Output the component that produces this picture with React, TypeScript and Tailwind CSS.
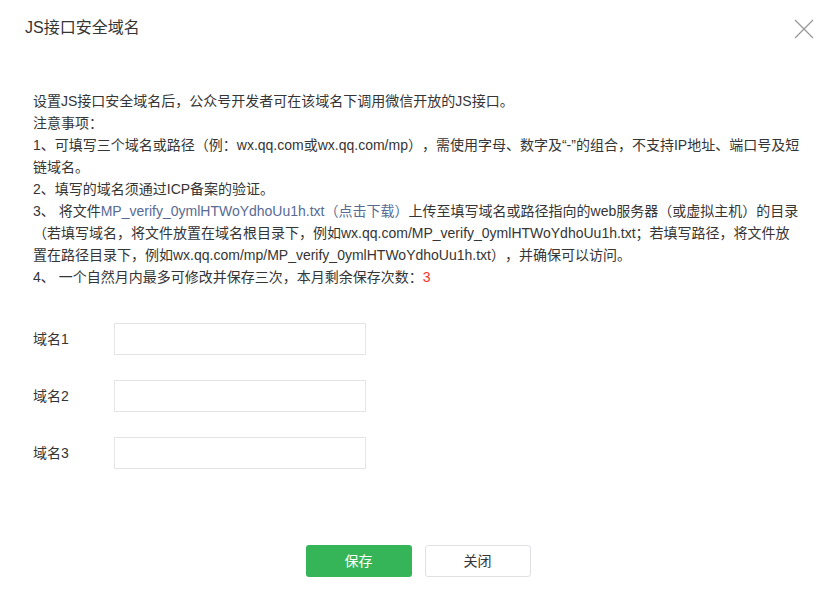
import React from "react";

const font = { fontFamily: '"Liberation Sans", "Noto Sans CJK SC", sans-serif' };

export default function App() {
  return (
    <div
      className="w-[826px] h-[600px] bg-white text-[#353535] overflow-hidden [text-spacing-trim:space-all]"
      style={font}
    >
      <div className="flex items-center justify-between h-[58px] pl-[25px] pr-[13px]">
        <div className="text-[16px] leading-[24px] -mt-[2px]">JS接口安全域名</div>
        <svg width="20" height="20" viewBox="0 0 20 20" className="-mr-[1px] -mt-[1px]">
          <path d="M1 1 L19 19 M19 1 L1 19" stroke="#9a9a9a" strokeWidth="1.3" fill="none" />
        </svg>
      </div>
      <div className="pl-[33px] pr-[25px] pt-[32px] text-[14px] leading-[22px]">
        <p>设置JS接口安全域名后，公众号开发者可在该域名下调用微信开放的JS接口。</p>
        <p>注意事项：</p>
        <p>1、可填写三个域名或路径（例：wx.qq.com或wx.qq.com/mp），需使用字母、数字及“-”的组合，不支持IP地址、端口号及短链域名。</p>
        <p>2、填写的域名须通过ICP备案的验证。</p>
        <p>
          3、 将文件<span className="text-[#576b95]">MP_verify_0ymlHTWoYdhoUu1h.txt（点击下载）</span>上传至填写域名或路径指向的web服务器（或虚拟主机）的目录（若填写域名，将文件放置在域名根目录下，例如wx.qq.com/MP_verify_0ymlHTWoYdhoUu1h.txt；若填写路径，将文件放置在路径目录下，例如wx.qq.com/mp/MP_verify_0ymlHTWoYdhoUu1h.txt），并确保可以访问。
        </p>
        <p>
          4、 一个自然月内最多可修改并保存三次，本月剩余保存次数：<span className="text-[#f43530]">3</span>
        </p>
      </div>
      <div className="pl-[33px] pt-[35px] flex flex-col gap-[25px]">
        {[1, 2, 3].map((n) => (
          <div key={n} className="flex items-center">
            <div className="w-[81px] text-[14px]">域名{n}</div>
            <input className="w-[252px] h-[32px] border border-[#e4e4e4] outline-none px-2 text-[14px]" />
          </div>
        ))}
      </div>
      <div className="flex justify-center gap-[13px] pt-[76px] pl-[10px]">
        <button className="w-[106px] h-[32px] rounded-[3px] bg-[#35b558] text-white text-[14px]">保存</button>
        <button className="w-[106px] h-[32px] rounded-[3px] bg-white border border-[#e0e1e6] text-[#353535] text-[14px]">关闭</button>
      </div>
    </div>
  );
}
